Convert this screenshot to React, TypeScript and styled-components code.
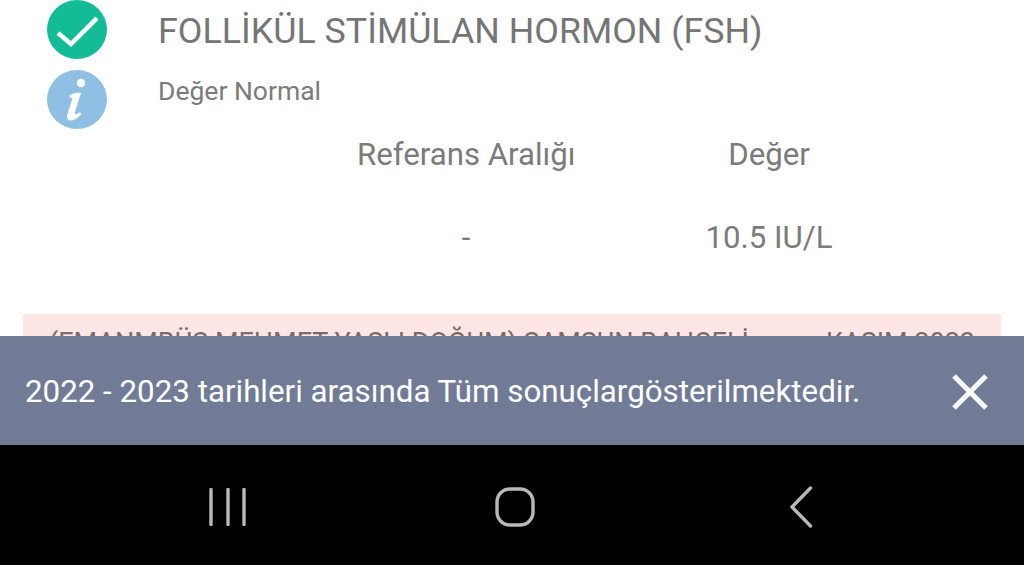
import React from "react";
import styled, { createGlobalStyle } from "styled-components";

const Global = createGlobalStyle`
  html, body { margin: 0; padding: 0; background: #fff; }
  body { font-family: Roboto, "Liberation Sans", sans-serif; }
`;

const Screen = styled.div`
  width: 1024px;
  height: 565px;
  overflow: hidden;
  display: flex;
  flex-direction: column;
`;

const Content = styled.div`
  height: 336px;
  overflow: hidden;
  background: #fff;
  flex: none;
`;

const Header = styled.div`
  display: grid;
  grid-template-columns: 60px 1fr;
  column-gap: 51px;
  padding: 0 0 0 47px;
  height: 129px;
`;

const IconColumn = styled.div`
  display: flex;
  flex-direction: column;
  gap: 11px;
`;

const Badge = styled.div<{ $bg: string }>`
  width: 60px;
  height: 59px;
  border-radius: 50%;
  background: ${(p) => p.$bg};
  display: flex;
  align-items: center;
  justify-content: center;
`;

const TitleColumn = styled.div`
  display: flex;
  flex-direction: column;
`;

const Title = styled.div`
  font-size: 35.8px;
  line-height: 40px;
  margin-top: 11px;
  color: #757575;
  white-space: nowrap;
`;

const Subtitle = styled.div`
  font-size: 26.5px;
  line-height: 30px;
  margin-top: 25px;
  color: #7b7b7b;
`;

const ValueGrid = styled.div`
  display: grid;
  grid-template-columns: 218px 218px;
  column-gap: 85px;
  padding-left: 357px;
  grid-auto-rows: 83px;
  margin-top: 9px;
`;

const Cell = styled.div`
  font-size: 31.2px;
  line-height: 34px;
  color: #7b7b7b;
  text-align: center;
  white-space: nowrap;
`;

const Alert = styled.div`
  margin: 10px 23px 0;
  height: 80px;
  background: #fde6e4;
  padding: 13px 26px 0;
  box-sizing: border-box;
  font-size: 27px;
  line-height: 32px;
  color: #7a6a6c;
  white-space: nowrap;
  overflow: hidden;
  display: flex;
  justify-content: space-between;
`;

const Snackbar = styled.div`
  height: 109px;
  flex: none;
  background: #717b96;
  display: flex;
  align-items: center;
  justify-content: space-between;
  padding: 2px 36px 0 25px;
  box-sizing: border-box;
`;

const SnackText = styled.div`
  font-size: 31.3px;
  color: #fff;
  white-space: nowrap;
`;

const NavBar = styled.div`
  flex: 1;
  background: #000;
  display: grid;
  grid-template-columns: repeat(3, 286.5px);
  align-items: center;
  justify-items: center;
  padding: 4px 0 0 85px;
`;

export default function App() {
  return (
    <Screen>
      <Global />
      <Content>
        <Header>
          <IconColumn>
            <Badge $bg="#14bb97">
              <svg width="42" height="34" viewBox="0 0 42 34" fill="none">
                <path d="M2 20 L15 31 L41 5" stroke="#fff" strokeWidth="4.5" />
              </svg>
            </Badge>
            <Badge $bg="#8fbfe3">
              <svg width="26" height="44" viewBox="0 0 26 44">
                <circle cx="17" cy="5" r="4.2" fill="#fff" />
                <path
                  d="M6 17 C10 14.5 14 14.5 17 15 L11 34 C10.5 36.5 12 37 16 34 L17.5 36 C13 41 9 43 6 42.5 C3 42 2.5 39 3.5 36 L8.5 20 L5.5 19.5 Z"
                  fill="#fff"
                />
              </svg>
            </Badge>
          </IconColumn>
          <TitleColumn>
            <Title>FOLLİKÜL STİMÜLAN HORMON (FSH)</Title>
            <Subtitle>Değer Normal</Subtitle>
          </TitleColumn>
        </Header>
        <ValueGrid>
          <Cell>Referans Aralığı</Cell>
          <Cell>Değer</Cell>
          <Cell>-</Cell>
          <Cell>10.5 IU/L</Cell>
        </ValueGrid>
        <Alert>
          <span>(EMANMBÜŞ MEHMET YAŞLI DOĞUM) SAMSUN BAHÇELİ</span>
          <span>KASIM 2023</span>
        </Alert>
      </Content>
      <Snackbar>
        <SnackText>2022 - 2023 tarihleri arasında Tüm sonuçlargösterilmektedir.</SnackText>
        <svg width="36" height="36" viewBox="0 0 36 36" fill="none">
          <path d="M2 2 L34 34 M34 2 L2 34" stroke="#fff" strokeWidth="5" />
        </svg>
      </Snackbar>
      <NavBar>
        <svg width="38" height="38" viewBox="0 0 38 38" fill="none">
          <path d="M2 1.5 V36.5 M19 1.5 V36.5 M35 1.5 V36.5" stroke="#b8b8b8" strokeWidth="3.4" strokeLinecap="round" />
        </svg>
        <svg width="40" height="40" viewBox="0 0 40 40" fill="none">
          <rect x="2" y="2" width="36" height="36" rx="13" stroke="#b8b8b8" strokeWidth="3.4" />
        </svg>
        <svg width="24" height="42" viewBox="0 0 24 42" fill="none">
          <path d="M21.5 2 L3 21 L21.5 40" stroke="#b8b8b8" strokeWidth="3.4" strokeLinecap="round" strokeLinejoin="round" />
        </svg>
      </NavBar>
    </Screen>
  );
}
